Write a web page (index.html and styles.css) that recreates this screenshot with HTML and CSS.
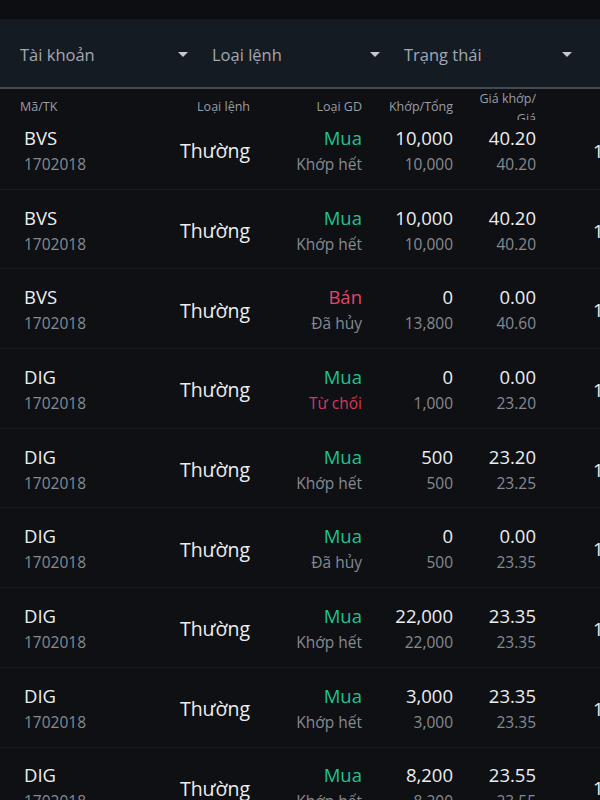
FILE: index.html
```html
<!DOCTYPE html>
<html lang="vi">
<head>
    <meta charset="UTF-8">
    <meta name="viewport" content="width=device-width, initial-scale=1.0">
    <title>Sổ lệnh</title>
    <link rel="stylesheet" href="styles.css">
</head>
<body>
    <div class="top-strip"></div>

    <div class="filters">
        <div class="filter"><span>Tài khoản</span><span class="caret"></span></div>
        <div class="filter"><span>Loại lệnh</span><span class="caret"></span></div>
        <div class="filter"><span>Trạng thái</span><span class="caret"></span></div>
    </div>

    <div class="table-head">
        <div class="c1">Mã/TK</div>
        <div class="c2">Loại lệnh</div>
        <div class="c3">Loại GD</div>
        <div class="c4">Khớp/Tổng</div>
        <div class="c5">Giá khớp/<br>Giá</div>
    </div>

    <div class="list">
        <div class="list-inner" id="list"></div>
    </div>

    <script>
        // dữ liệu sổ lệnh
        const orders = [
            ['BVS', 'Mua', 'Khớp hết', '10,000', '10,000', '40.20', '40.20'],
            ['BVS', 'Mua', 'Khớp hết', '10,000', '10,000', '40.20', '40.20'],
            ['BVS', 'Bán', 'Đã hủy', '0', '13,800', '0.00', '40.60'],
            ['DIG', 'Mua', 'Từ chối', '0', '1,000', '0.00', '23.20'],
            ['DIG', 'Mua', 'Khớp hết', '500', '500', '23.20', '23.25'],
            ['DIG', 'Mua', 'Đã hủy', '0', '500', '0.00', '23.35'],
            ['DIG', 'Mua', 'Khớp hết', '22,000', '22,000', '23.35', '23.35'],
            ['DIG', 'Mua', 'Khớp hết', '3,000', '3,000', '23.35', '23.35'],
            ['DIG', 'Mua', 'Khớp hết', '8,200', '8,200', '23.55', '23.55']
        ];

        const list = document.getElementById('list');
        orders.forEach(function(o) {
            const side = o[1] === 'Mua' ? 'buy' : 'sell';
            const status = o[2] === 'Từ chối' ? 'sub reject' : 'sub';
            const row = document.createElement('div');
            row.className = 'row';
            row.innerHTML =
                '<div class="c1"><div class="main">' + o[0] + '</div><div class="sub">1702018</div></div>' +
                '<div class="c2 kind">Thường</div>' +
                '<div class="c3"><div class="main ' + side + '">' + o[1] + '</div><div class="' + status + '">' + o[2] + '</div></div>' +
                '<div class="c4"><div class="main">' + o[3] + '</div><div class="sub">' + o[4] + '</div></div>' +
                '<div class="c5"><div class="main">' + o[5] + '</div><div class="sub">' + o[6] + '</div></div>' +
                '<div class="c6"><div class="main">14:25</div></div>';
            list.appendChild(row);
        });
    </script>
</body>
</html>
```

FILE: styles.css
```css
body {
    margin: 0;
    padding: 0;
    width: 600px;
    height: 800px;
    overflow: hidden;
    background-color: #0e1014;
    font-family: 'Open Sans', sans-serif;
    color: #e9eaec;
}
.top-strip {
    height: 19px;
    background-color: #0c0e11;
}
.filters {
    display: grid;
    grid-template-columns: 192px 192px 192px;
    height: 68px;
    background-color: #151b23;
    border-bottom: 2px solid #464a50;
}
.filter {
    display: flex;
    align-items: center;
    justify-content: space-between;
    padding: 2px 4px 0 20px;
    font-size: 16.5px;
    color: #a3a8b0;
}
.caret {
    width: 0;
    height: 0;
    border-left: 5px solid transparent;
    border-right: 5px solid transparent;
    border-top: 5px solid #c5c9cf;
}
.table-head {
    display: flex;
    height: 31px;
    overflow: hidden;
    font-size: 12.5px;
    color: #9a9ea5;
    background-color: #0e1014;
    position: relative;
    z-index: 1;
}
.table-head > div {
    padding-top: 9px;
    line-height: 17px;
}
.table-head .c1 {
    padding-left: 20px;
}
.table-head .c5 {
    padding-top: 0;
    line-height: 20px;
}
.c1, .c2, .c3, .c4, .c5, .c6 {
    flex-shrink: 0;
    box-sizing: border-box;
}
.c1 {
    width: 170px;
    padding-left: 24px;
    text-align: left;
}
.c2 { width: 80px; text-align: right; }
.c3 { width: 112px; text-align: right; }
.c4 { width: 91px; text-align: right; }
.c5 { width: 83px; text-align: right; }
.c6 {
    margin-left: 57px;
    white-space: nowrap;
}
.list {
    height: 681px;
    overflow: hidden;
}
.list-inner {
    margin-top: -10px;
}
.row {
    display: flex;
    align-items: center;
    height: 79.7px;
    box-sizing: border-box;
    padding-top: 3px;
    border-bottom: 1px solid #1a1c21;
}
.row .main {
    font-size: 18.5px;
    line-height: 26px;
    color: #eceef0;
}
.row .sub {
    font-size: 15.5px;
    line-height: 26px;
    color: #868a91;
}
.kind {
    font-size: 19.5px;
    color: #eceef0;
}
.row .buy {
    color: #22c08f;
}
.row .sell {
    color: #e2456a;
}
.row .reject {
    color: #d8385e;
}
```
